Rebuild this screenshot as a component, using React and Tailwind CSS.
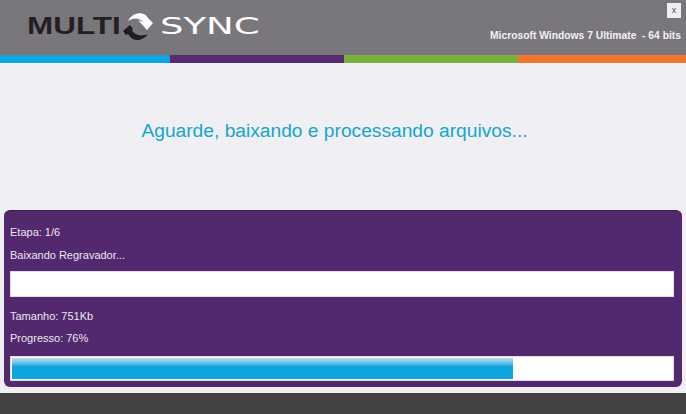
export default function App() {
  return (
    <div className="w-[686px] h-[414px] flex flex-col overflow-hidden bg-[#f0eff3] font-['Liberation_Sans',Arial,sans-serif]">
      {/* Header */}
      <div className="h-[55px] shrink-0 bg-[#7a777c] flex justify-between pl-[27px] pr-[5px]">
        <div className="flex items-center h-[52px]">
          <span className="w-[90px] text-[24px] leading-none font-bold text-[#231f22] scale-x-[1.31] origin-left">MULTI</span>
          <svg width="36" height="32" viewBox="120 10 36 32" className="ml-[3px] shrink-0">
            {/* top white arrow */}
            <path d="M128 21 C131 15 137 12.5 142 13.5 C145 14 147 16 148 18 L153 23 L147 30 L138 20 L143 22 C140 18 134 17 128 21 Z" fill="#ffffff" />
            {/* bottom dark arrow */}
            <path d="M123 31 L130 25 L133 29 L132 30 C134 35 141 37 148 34 C145 38 141 40 137 40 C133 40 130 37 128 34 L126 35 Z" fill="#1f1c1e" />
          </svg>
          <span className="ml-[4px] w-[98px] text-[23px] leading-none font-['DejaVu_Sans',sans-serif] font-normal text-white scale-x-[1.61] origin-left">SYNC</span>
        </div>
        <div className="flex flex-col items-end pt-[3px]">
          <button className="w-[14px] h-[15px] bg-[#efeef0] text-[#55525a] text-[9px] leading-[15px] text-center">x</button>
          <div className="mt-[11px] text-[10.3px] leading-[14px] font-bold text-[#f2f1f3] whitespace-pre">Microsoft Windows 7 Ultimate  - 64 bits</div>
        </div>
      </div>

      {/* Color stripes */}
      <div className="h-[8px] shrink-0 flex">
        <div className="w-[170px] bg-[#0ca6e0]" />
        <div className="w-[174px] bg-[#57296f]" />
        <div className="w-[174px] bg-[#7ab040]" />
        <div className="flex-1 bg-[#f2762e]" />
      </div>

      {/* Message */}
      <div className="h-[147px] shrink-0 flex items-start justify-center pt-[56px] pr-[17px]">
        <h1 className="text-[19.2px] leading-[24px] font-normal text-[#17a5cf]">Aguarde, baixando e processando arquivos...</h1>
      </div>

      {/* Progress panel */}
      <div className="mx-[4px] h-[177px] shrink-0 rounded-[6px] bg-[#52296e] border-t border-[#3a1c52] px-[6px] text-[11px] text-[#ece6f0]">
        <div className="mt-[14px] leading-[14px]">Etapa: 1/6</div>
        <div className="mt-[9px] leading-[14px]">Baixando Regravador...</div>
        <div className="mt-[9px] h-[26px] w-[664px] bg-white border border-[#e6dcec]" />
        <div className="mt-[12px] leading-[14px]">Tamanho: 751Kb</div>
        <div className="mt-[8px] leading-[14px]">Progresso: 76%</div>
        <div className="mt-[11px] h-[25px] w-[664px] bg-white border border-[#e6dcec] p-[1px]">
          <div className="h-[21px] w-[501px] bg-gradient-to-b from-[#b5e3f3] via-[#0ca6e0] via-40% to-[#0ca6e0]" />
        </div>
      </div>

      {/* Footer */}
      <div className="mt-[6px] flex-1 bg-[#454244]" />
    </div>
  );
}
